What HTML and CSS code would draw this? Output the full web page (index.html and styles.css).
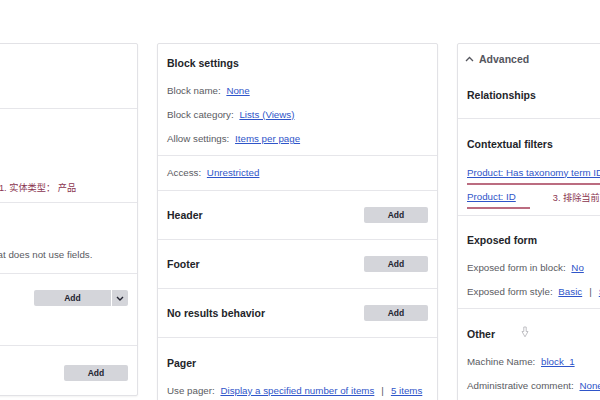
FILE: index.html
```html
<!DOCTYPE html>
<html lang="en">
<head>
    <meta charset="UTF-8">
    <title>Views - Block display</title>
    <link rel="stylesheet" href="styles.css">
</head>
<body>
    <main class="columns">
        <!-- first column: mostly off screen -->
        <section class="card">
            <div class="block title-block">
                <h3>Title</h3>
                <div class="row"><span class="label">Title:</span> <a href="#">None</a></div>
            </div>
            <div class="block format-block">
                <h3>Format</h3>
                <div class="row"><span class="label">Format:</span> <a href="#">Grid</a></div>
                <div class="row note-row">
                    <span class="lead"><span class="label">Show:</span> <a href="#">Product</a></span>
                    <span class="note">1. 实体类型：&nbsp;产品</span>
                </div>
            </div>
            <div class="block fields-block">
                <h3>Fields</h3>
                <div class="row">The selected style or row format does not use fields.</div>
            </div>
            <div class="block filter-block">
                <div class="bar">
                    <h3>Filter criteria</h3>
                    <div class="dropbutton">
                        <button class="btn drop-main">Add</button>
                        <button class="btn drop-toggle">
                            <svg width="8" height="5" viewBox="0 0 8 5"><polyline points="1,1 4,4 7,1" fill="none" stroke="#222330" stroke-width="1.4"/></svg>
                        </button>
                    </div>
                </div>
            </div>
            <div class="block sort-block">
                <div class="bar">
                    <h3>Sort criteria</h3>
                    <button class="btn">Add</button>
                </div>
            </div>
        </section>

        <!-- second column -->
        <section class="card">
            <div class="block settings-block">
                <h3>Block settings</h3>
                <div class="row"><span class="label">Block name:</span> <a href="#">None</a></div>
                <div class="row"><span class="label">Block category:</span> <a href="#">Lists (Views)</a></div>
                <div class="row"><span class="label">Allow settings:</span> <a href="#">Items per page</a></div>
            </div>
            <div class="block access-block">
                <div class="row"><span class="label">Access:</span> <a href="#">Unrestricted</a></div>
            </div>
            <div class="block bar-block">
                <div class="bar"><h3>Header</h3><button class="btn">Add</button></div>
            </div>
            <div class="block bar-block">
                <div class="bar"><h3>Footer</h3><button class="btn">Add</button></div>
            </div>
            <div class="block bar-block">
                <div class="bar"><h3>No results behavior</h3><button class="btn">Add</button></div>
            </div>
            <div class="block pager-block">
                <h3>Pager</h3>
                <div class="row"><span class="label">Use pager:</span> <a href="#">Display a specified number of items</a><span class="sep">|</span><a href="#">5 items</a></div>
            </div>
        </section>

        <!-- third column -->
        <section class="card">
            <div class="block advanced-block">
                <div class="summary">
                    <svg class="chevron" width="9" height="6" viewBox="0 0 9 6"><polyline points="1,5 4.5,1.5 8,5" fill="none" stroke="#55565e" stroke-width="1.3"/></svg>
                    <span>Advanced</span>
                </div>
                <h3>Relationships</h3>
            </div>
            <div class="block filters-block">
                <h3>Contextual filters</h3>
                <div class="mark-row">
                    <span class="mark"><a href="#">Product: Has taxonomy term ID (with depth)</a></span>
                </div>
                <div class="mark-row">
                    <span class="mark short"><a href="#">Product: ID</a></span>
                    <span class="note">3. 排除当前产品</span>
                </div>
            </div>
            <div class="block exposed-block">
                <h3>Exposed form</h3>
                <div class="row"><span class="label">Exposed form in block:</span> <a href="#">No</a></div>
                <div class="row"><span class="label">Exposed form style:</span> <a href="#">Basic</a><span class="sep">|</span><a href="#">Settings</a></div>
            </div>
            <div class="block other-block">
                <h3>Other</h3>
                <svg class="cursor" width="8" height="12" viewBox="0 0 8 12">
                    <path d="M2.8 1 H5.2 V5.5 H7 L4 10.8 L1 5.5 H2.8 Z" fill="#fff" stroke="#b9b9bd" stroke-width="0.9" stroke-linejoin="round"/>
                </svg>
                <div class="row"><span class="label">Machine Name:</span> <a href="#">block_1</a></div>
                <div class="row"><span class="label">Administrative comment:</span> <a href="#">None</a></div>
            </div>
        </section>
    </main>
</body>
</html>
```

FILE: styles.css
```css
* {
    box-sizing: border-box;
}

html,
body {
    margin: 0;
    height: 100%;
    overflow: hidden;
}

body {
    background: #fff;
    color: #222330;
    font-family: "Liberation Sans", Arial, "Noto Sans CJK SC", sans-serif;
    font-size: 9.75px;
}

.columns {
    display: flex;
    align-items: flex-start;
    gap: 19px;
    margin-left: -143px;
    padding-top: 43px;
}

.card {
    flex: 0 0 281px;
    background: #fff;
    border: 1px solid #e2e2e6;
    border-radius: 2px;
    box-shadow: 0 1px 2px rgba(0, 0, 0, 0.05);
}

.block {
    border-top: 1px solid #e6e6ea;
    padding: 17px 9px 4px;
}

.block:first-child {
    border-top: 0;
}

h3 {
    margin: 0 0 8px;
    font-size: 10.5px;
    line-height: 16px;
    font-weight: bold;
    color: #232429;
}

.row {
    line-height: 24px;
    white-space: nowrap;
    color: #5a5b62;
}

.label {
    margin-right: 3px;
}

a {
    color: #2f55c9;
    text-decoration: underline;
    text-underline-offset: 1px;
}

.sep {
    margin: 0 7px;
    color: #55565e;
}

.note {
    color: #8a3550;
    white-space: nowrap;
    font-size: 9.2px;
}

/* heading + button rows */
.bar {
    display: flex;
    align-items: center;
    justify-content: space-between;
    height: 48px;
}

.bar h3 {
    margin: 0;
}

.bar-block {
    padding: 0 9px;
}

.btn {
    width: 64px;
    height: 16px;
    padding: 0;
    border: 0;
    border-radius: 2px;
    background: #d4d5da;
    color: #222330;
    font-family: inherit;
    font-size: 8.5px;
    font-weight: bold;
}

.dropbutton {
    display: flex;
    gap: 1px;
}

.drop-main {
    width: 77px;
    border-radius: 2px 0 0 2px;
}

.drop-toggle {
    display: flex;
    align-items: center;
    justify-content: center;
    width: 16px;
    border-radius: 0 2px 2px 0;
}

/* first column */
.title-block {
    padding: 13px 9px 3px;
}

.format-block {
    padding: 19px 9px 2px;
}

.note-row {
    display: flex;
    align-items: center;
}

.note-row .lead {
    flex: 0 0 132px;
}

.fields-block {
    padding: 17px 9px 6px;
}

.fields-block h3 {
    margin-bottom: 7px;
}

.filter-block {
    padding: 0 9px 23px;
}

.sort-block {
    padding: 4px 9px 0;
}

.sort-block .bar {
    height: 45px;
}

/* second column */
.settings-block {
    padding: 11px 9px 4px;
}

.access-block {
    padding: 5px 9px;
}

/* third column */
.advanced-block {
    padding: 7px 9px 15px;
}

.advanced-block h3 {
    margin: 0;
}

.summary {
    display: flex;
    align-items: center;
    gap: 5px;
    height: 16px;
    margin-bottom: 20px;
    margin-left: -2px;
    color: #55565e;
    font-size: 10.5px;
    font-weight: bold;
}

.filters-block {
    padding: 17px 9px 6px;
}

.filters-block h3 {
    margin-bottom: 9px;
}

.mark-row {
    display: flex;
    align-items: center;
    height: 24px;
    white-space: nowrap;
}

.mark {
    line-height: 21px;
    border-bottom: 2px solid #bb6c80;
}

.mark.short {
    padding-right: 14px;
}

.mark-row .note {
    margin-left: 23px;
}

.exposed-block {
    padding: 16px 9px 4px;
}

.other-block {
    position: relative;
}

.cursor {
    position: absolute;
    left: 63px;
    top: 17px;
}
```
